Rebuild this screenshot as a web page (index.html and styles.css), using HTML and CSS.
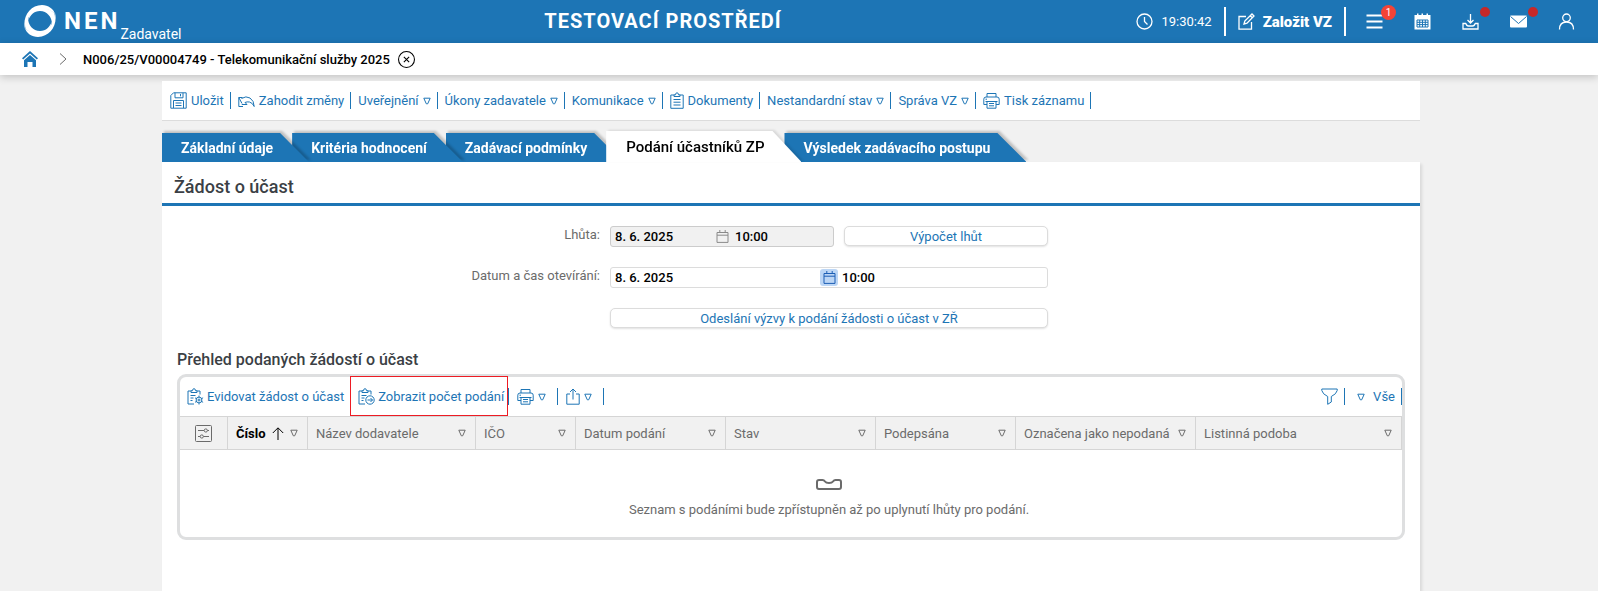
FILE: index.html
```html
<!DOCTYPE html>
<html lang="cs">
<head>
  <meta charset="UTF-8">
  <title>NEN - Podání účastníků ZP</title>
  <link rel="stylesheet" href="styles.css">
</head>
<body>
  <!-- Sdílené ikony -->
  <svg class="sprite" aria-hidden="true">
    <symbol id="i-arrow" viewBox="0 0 8 8"><path d="M.8 1.2h6.400L4.700 6.800H3.300z"/></symbol>
    <symbol id="i-print" viewBox="0 0 17 17"><path d="M4 5V1.5h9V5M4 12.5H.8V7.2Q.8 5 3 5h11q2.2 0 2.2 2.2v5.3H13M2.5 9.5h12M4 9.5v6.7h9V9.5M6 11.5h5M6 13.8h5M2.5 7.2h1.5"/></symbol>
    <symbol id="i-calendar" viewBox="0 0 13 13"><path d="M1 2.5h11v9.9H1zM1 5.2h11M3.8 0v2.5M9.2 0v2.5"/></symbol>
  </svg>

  <header class="header">
    <a class="logo" href="#">
      <svg class="logo-mark" viewBox="0 0 32 32">
        <path d="M1 24C-2 12 6 0 18 0c6 0 12 4 13 9-4-4-8-5-13-5C9 4 3 11 1 24z"/>
        <path d="M31 8c3 12-5 24-17 24C8 32 2 28 1 23c4 4 8 5 13 5 9 0 15-7 17-20z"/>
        <path d="M30 8c2 4 0 9-2 11 0-7-5-13-12-13-6 0-10 4-12 10C5 8 10 3 17 3c6 0 10 2 13 5zM2 24c-2-4 0-9 2-11 0 7 5 13 12 13 6 0 10-4 12-10-1 8-6 13-13 13-6 0-10-2-13-5z"/>
      </svg>
      <span class="logo-name">NEN</span>
      <span class="logo-role">Zadavatel</span>
    </a>
    <div class="env-title">TESTOVACÍ PROSTŘEDÍ</div>
    <div class="header-right">
      <div class="clock">
        <svg class="icon" viewBox="0 0 17 17"><circle cx="8.5" cy="8.5" r="7.5"/><path d="M8.5 4v4.5l3 3"/></svg>
        <span>19:30:42</span>
      </div>
      <button class="new-button" type="button">
        <svg class="icon" viewBox="0 0 17 17"><path d="M8 3.5H1v12.7h12.5V9M6 11l.8-3L14 1l2 2-7 7.2zM12.3 2.7l2 2"/></svg>
        Založit VZ
      </button>
      <button class="header-button" type="button" aria-label="Menu">
        <svg class="icon bold" viewBox="0 0 17 17"><path d="M.5 2.5h16M.5 8.5h16M.5 14.5h16"/></svg>
        <span class="badge">1</span>
      </button>
      <button class="header-button" type="button" aria-label="Kalendář">
        <svg class="icon" viewBox="0 0 17 17"><path class="fill" d="M.5 2H3V.5h1.5V2h3V.5H9V2h3.500V.5H14V2h2.500v14.500H.5z"/><path class="cut" d="M3 7h11v7H3zM3 9.300h11M3 11.600h11M5.700 7v7M8.500 7v7M11.300 7v7"/></svg>
      </button>
      <button class="header-button" type="button" aria-label="Stažené soubory">
        <svg class="icon" viewBox="0 0 17 17"><path d="M8.500 1v9M5.500 7l3 3 3-3M4 10.500H1V16h15v-5.500h-3M4 10.500q.5 2.500 2.500 2.500h4q2 0 2.500-2.500"/></svg>
        <span class="dot"></span>
      </button>
      <button class="header-button" type="button" aria-label="Zprávy">
        <svg class="icon" viewBox="0 0 17 17"><rect class="fill" x="0" y="2.500" width="17" height="12" rx="1"/><path class="cut" d="M.5 3.500l8 7 8-7"/></svg>
        <span class="dot"></span>
      </button>
      <button class="header-button" type="button" aria-label="Uživatel">
        <svg class="icon" viewBox="0 0 17 17"><circle cx="8.500" cy="4.800" r="3.800"/><path d="M1.500 16.500q0-7.500 7-7.500t7 7.500"/></svg>
      </button>
    </div>
  </header>

  <nav class="breadcrumb">
    <a class="home" href="#" aria-label="Domů">
      <svg viewBox="0 0 16 16"><path d="M0 7.200L8 0l8 7.200-1.200 1.300L8 2.500 1.200 8.500z"/><path d="M2 9.300l6-5.300 6 5.300V16h-3.500v-5h-5v5H2z"/></svg>
    </a>
    <svg class="chevron" viewBox="0 0 8 12"><path d="M1 .5L7 6l-6 5.500"/></svg>
    <span class="crumb">N006/25/V00004749 - Telekomunikační služby 2025</span>
    <button class="close-button" type="button" aria-label="Zavřít">
      <svg viewBox="0 0 16 16"><circle cx="8" cy="8" r="7.500"/><path d="M5.500 5.500l5 5M10.500 5.500l-5 5"/></svg>
    </button>
  </nav>

  <main class="main-content">
    <div class="toolbar">
      <button class="tool" type="button">
        <svg class="icon" viewBox="0 0 17 17"><path d="M3.500.8h12.700v15.400H.8V3.500zM5 .8v5h8v-5M10.500 2v2.300M3.500 16V8.500h10V16M5.500 11h6M5.500 13.500h6"/></svg>
        Uložit
      </button>
      <button class="tool" type="button">
        <svg class="icon" viewBox="0 0 17 17"><path d="M4.500 5.500H.8v9H5M.8 5.500L4 11.500M3.500 6.500Q8 3.500 12 6q4 2.500 4.200 8.500-1.700-3.700-4.700-4.500-2.500-.5-4.500.5l2 2H3.800"/></svg>
        Zahodit změny
      </button>
      <button class="tool" type="button">Uveřejnění <svg class="arrow"><use href="#i-arrow"/></svg></button>
      <button class="tool" type="button">Úkony zadavatele <svg class="arrow"><use href="#i-arrow"/></svg></button>
      <button class="tool" type="button">Komunikace <svg class="arrow"><use href="#i-arrow"/></svg></button>
      <button class="tool" type="button">
        <svg class="icon narrow" viewBox="0 0 14 17"><path d="M4 3H.8v13.300h12.400V3H10M4 4.500V2.800h1.500q0-2 1.500-2t1.500 2H10v1.700zM3.500 7.500h7M3.500 10.200h7M3.500 13h7"/></svg>
        Dokumenty
      </button>
      <button class="tool" type="button">Nestandardní stav <svg class="arrow"><use href="#i-arrow"/></svg></button>
      <button class="tool" type="button">Správa VZ <svg class="arrow"><use href="#i-arrow"/></svg></button>
      <button class="tool" type="button"><svg class="icon"><use href="#i-print"/></svg> Tisk záznamu</button>
    </div>

    <nav class="tabs">
      <div class="tab"><a href="#">Základní údaje</a></div>
      <div class="tab"><a href="#">Kritéria hodnocení</a></div>
      <div class="tab"><a href="#">Zadávací podmínky</a></div>
      <div class="tab active"><a href="#">Podání účastníků ZP</a></div>
      <div class="tab"><a href="#">Výsledek zadávacího postupu</a></div>
    </nav>

    <section class="panel">
      <h1 class="panel-title">Žádost o účast</h1>

      <form class="form">
        <label for="deadlineDate">Lhůta:</label>
        <div class="form-row">
          <div class="field disabled">
            <input id="deadlineDate" type="text" value="8. 6. 2025" readonly>
            <span class="calendar"><svg><use href="#i-calendar"/></svg></span>
            <input type="text" value="10:00" aria-label="Lhůta - čas" readonly>
          </div>
          <button class="form-button" type="button">Výpočet lhůt</button>
        </div>
        <label for="openDate">Datum a čas otevírání:</label>
        <div class="form-row">
          <div class="field">
            <input id="openDate" type="text" value="8. 6. 2025">
            <button class="calendar" type="button" aria-label="Vybrat datum"><svg><use href="#i-calendar"/></svg></button>
            <input type="text" value="10:00" aria-label="Čas otevírání">
          </div>
        </div>
        <div class="form-row last">
          <button class="form-button" type="button">Odeslání výzvy k podání žádosti o účast v ZŘ</button>
        </div>
      </form>

      <h2 class="list-title">Přehled podaných žádostí o účast</h2>
      <div class="list">
        <div class="list-toolbar">
          <button class="tool" type="button">
            <svg class="icon" viewBox="0 0 17 17"><path d="M4 3H1v13h6M4 4.500V2.700h1.500q0-2 1.500-2t1.500 2H10v1.800zM10 3h3v3.500M3.500 7.500h5M3.500 10h3M3.500 12.500h2M12 7.500v1.700M12 14.800v1.700M8 9.800l1.600 1M14.400 13.300l1.700 1M8 14.300l1.600-1M14.400 10.800l1.700-1"/><circle cx="12" cy="12" r="2.900"/><circle cx="12" cy="12" r="1"/></svg>
            Evidovat žádost o účast
          </button>
          <button class="tool highlighted" type="button">
            <svg class="icon" viewBox="0 0 17 17"><path d="M4 3H1v13h6M4 4.500V2.700h1.500q0-2 1.500-2t1.500 2H10v1.800zM10 3h3v3.500M3.500 7.500h5M3.500 10h3M3.500 12.500h2M9.500 12h5M12.500 10l2 2-2 2"/><circle cx="12" cy="12" r="4.200"/></svg>
            Zobrazit počet podání
          </button>
          <button class="tool menu" type="button" aria-label="Tisk"><svg class="icon"><use href="#i-print"/></svg><svg class="arrow"><use href="#i-arrow"/></svg></button>
          <button class="tool menu" type="button" aria-label="Export">
            <svg class="icon narrow" viewBox="0 0 14 17"><path d="M4 6H.8v10.200h12.400V6H10M7 11.500V1.200M4 4l3-3 3 3"/></svg>
            <svg class="arrow"><use href="#i-arrow"/></svg>
          </button>
          <button class="tool filter" type="button" aria-label="Filtr">
            <svg class="icon" viewBox="0 0 17 17"><path d="M.8 1h15.400v1.500Q15.500 6 10.300 8.500v5.500l-3.600 2.300V8.500Q1.500 6 .8 2.500z"/></svg>
          </button>
          <button class="tool view" type="button"><svg class="arrow"><use href="#i-arrow"/></svg> Vše</button>
        </div>
        <table class="list-table">
          <colgroup>
            <col class="w-settings"><col class="w-number"><col class="w-name"><col class="w-ico"><col class="w-date">
            <col class="w-date"><col class="w-signed"><col class="w-marked"><col>
          </colgroup>
          <thead>
            <tr>
              <th class="settings">
                <svg viewBox="0 0 17 17"><rect x=".5" y=".5" width="16" height="16" rx="1"/><path d="M3 5.500h6M12.500 5.500H14M3 11.500h2M8.500 11.500H14"/><circle cx="10.800" cy="5.500" r="1.600"/><circle cx="6.800" cy="11.500" r="1.600"/></svg>
              </th>
              <th class="sorted"><div>Číslo <svg class="sort" viewBox="0 0 12 13"><path d="M6 13V1M.8 6L6 .8 11.200 6"/></svg><svg class="arrow"><use href="#i-arrow"/></svg></div></th>
              <th><div>Název dodavatele <svg class="arrow"><use href="#i-arrow"/></svg></div></th>
              <th><div>IČO <svg class="arrow"><use href="#i-arrow"/></svg></div></th>
              <th><div>Datum podání <svg class="arrow"><use href="#i-arrow"/></svg></div></th>
              <th><div>Stav <svg class="arrow"><use href="#i-arrow"/></svg></div></th>
              <th><div>Podepsána <svg class="arrow"><use href="#i-arrow"/></svg></div></th>
              <th><div>Označena jako nepodaná <svg class="arrow"><use href="#i-arrow"/></svg></div></th>
              <th><div>Listinná podoba <svg class="arrow"><use href="#i-arrow"/></svg></div></th>
            </tr>
          </thead>
          <tbody>
            <tr>
              <td class="empty" colspan="9">
                <svg viewBox="0 0 26 11"><path d="M3 1h3.500q1.500 0 2.500 1.500t4 1.500 4-1.500T19.500 1H23q2 0 2 2v5q0 2-2 2H3q-2 0-2-2V3q0-2 2-2z"/></svg>
                <p>Seznam s podáními bude zpřístupněn až po uplynutí lhůty pro podání.</p>
              </td>
            </tr>
          </tbody>
        </table>
      </div>
    </section>
  </main>
</body>
</html>
```

FILE: styles.css
```css
* {
  box-sizing: border-box;
}
body {
  margin: 0;
  min-height: 100vh;
  display: flex;
  flex-direction: column;
  background: #f1f1f1;
  font-family: Roboto, Arial, sans-serif;
  font-size: 13px;
  color: #6b6b6b;
}
button, input {
  font-family: inherit;
  font-size: inherit;
}
button {
  border: none;
  background: none;
  padding: 0;
  cursor: pointer;
}
a {
  text-decoration: none;
}
svg {
  display: block;
  flex: none;
  fill: none;
  stroke: currentColor;
}
.sprite {
  width: 0;
  height: 0;
  position: absolute;
}
.icon {
  width: 17px;
  height: 17px;
}
.icon.narrow {
  width: 14px;
}
.arrow {
  width: 8px;
  height: 8px;
}

/* Horní lišta */
.header {
  display: grid;
  grid-template-columns: 1fr auto 1fr;
  align-items: center;
  height: 43px;
  background: #1d75b5;
  color: #fff;
}
.logo {
  display: flex;
  align-items: center;
  height: 43px;
  padding-left: 24px;
  color: #fff;
}
.logo-mark {
  width: 32px;
  height: 32px;
  margin-right: 8px;
  margin-bottom: 2px;
  fill: #fff;
  stroke: none;
}
.logo-name {
  padding-bottom: 2px;
  font-size: 24px;
  font-weight: 700;
  letter-spacing: 3px;
}
.logo-role {
  align-self: flex-end;
  font-size: 14px;
  line-height: 18px;
}
.env-title {
  font-size: 20px;
  font-weight: 700;
  letter-spacing: 1px;
  padding-right: 272px;
  padding-bottom: 2px;
}
.header-right {
  display: flex;
  align-items: center;
  justify-content: flex-end;
  padding-right: 8px;
}
.clock {
  display: flex;
  align-items: center;
  gap: 8px;
  padding-right: 12px;
}
.new-button {
  display: flex;
  align-items: center;
  gap: 8px;
  height: 29px;
  padding: 0 12px;
  margin-right: 4px;
  border-left: 2px solid #fff;
  border-right: 2px solid #fff;
  color: #fff;
  font-size: 15px;
  font-weight: 900;
  white-space: nowrap;
}
.header-button {
  position: relative;
  display: flex;
  justify-content: center;
  align-items: center;
  width: 48px;
  height: 43px;
  color: #fff;
}
.header .icon {
  stroke-width: 1.3;
}
.header .bold {
  stroke-width: 2;
}
.fill {
  fill: #fff;
  stroke: none;
}
.cut {
  stroke: #1d75b5;
  stroke-width: 1;
}
.badge {
  position: absolute;
  top: 5px;
  right: 2px;
  width: 15px;
  height: 15px;
  border-radius: 50%;
  background: #f44336;
  font-size: 10px;
  line-height: 15px;
}
.dot {
  position: absolute;
  top: 7px;
  right: 4px;
  width: 10px;
  height: 10px;
  border-radius: 50%;
  background: #c62828;
}

/* Drobečková navigace */
.breadcrumb {
  display: flex;
  align-items: center;
  height: 32px;
  padding-left: 22px;
  background: #fff;
  box-shadow: 0 2px 8px rgba(0, 0, 0, 0.2);
}
.home svg {
  width: 16px;
  height: 16px;
  fill: #1d75b5;
  stroke: none;
}
.chevron {
  width: 8px;
  height: 12px;
  margin: 0 16px 0 21px;
}
.crumb {
  color: #000;
  font-weight: 500;
}
.close-button {
  margin-left: 8px;
  color: #000;
}
.close-button svg {
  width: 17px;
  height: 17px;
}

.main-content {
  flex: 1;
  display: flex;
  flex-direction: column;
  padding: 6px 178px 0 162px;
}

/* Panel akcí */
.toolbar {
  display: flex;
  align-items: center;
  height: 40px;
  padding-left: 1px;
  background: #fff;
  border-bottom: 1px solid #dcdcdc;
}
.tool {
  display: flex;
  align-items: center;
  gap: 4px;
  height: 17px;
  padding: 0 6px 0 7px;
  border-right: 1px solid #1d75b5;
  color: #1d75b5;
  white-space: nowrap;
}

/* Záložky */
.tabs {
  display: flex;
  align-items: flex-end;
  height: 31px;
  margin-top: 10px;
}
.tab {
  position: relative;
  margin-right: -17px;
  filter: drop-shadow(2px -2px 1px rgba(0, 0, 0, 0.2));
}
.tab:nth-child(1) {
  z-index: 3;
}
.tab:nth-child(2) {
  z-index: 2;
}
.tab:nth-child(3) {
  z-index: 1;
}
.tab a {
  display: block;
  padding: 2px 36px 0 19px;
  background: #1d75b5;
  color: #fff;
  font-size: 14px;
  font-weight: 700;
  line-height: 27px;
  white-space: nowrap;
  clip-path: polygon(0 0, calc(100% - 29px) 0, 100% 100%, 0 100%);
}
.tab.active {
  z-index: 4;
  filter: drop-shadow(2px -1px 1px rgba(0, 0, 0, 0.1));
}
.tab.active a {
  padding: 2px 37px 0 20px;
  background: #fff;
  color: #000;
  font-size: 15px;
  font-weight: 500;
  line-height: 29px;
}

/* Obsah */
.panel {
  flex: 1;
  background: #fff;
  box-shadow: 2px 2px 3px rgba(0, 0, 0, 0.1);
}
.panel-title {
  margin: 0;
  padding: 8px 12px 0;
  height: 44px;
  border-bottom: 3px solid #1d75b5;
  color: #3b3f45;
  font-size: 18px;
  font-weight: 500;
  line-height: 34px;
}
.form {
  display: grid;
  grid-template-columns: 438px 438px;
  gap: 20px 10px;
  padding-top: 20px;
}
.form label {
  text-align: right;
  line-height: 18px;
}
.form-row {
  display: flex;
  gap: 10px;
  height: 21px;
}
.form-row.last {
  grid-column: 2;
}
.field {
  flex: 1;
  min-width: 0;
  display: flex;
  align-items: center;
  border: 1px solid #dcdcdc;
  border-radius: 3px;
}
.field.disabled {
  background: #f1f1f1;
  border-color: #ccc;
}
.field input {
  flex: 1;
  min-width: 0;
  padding: 0 4px;
  border: none;
  background: none;
  outline: none;
  color: #000;
  font-weight: 500;
}
.calendar {
  display: flex;
  align-items: center;
  justify-content: center;
  width: 18px;
  height: 17px;
  border-radius: 3px;
  color: #8a8a8a;
}
button.calendar {
  background: #bcd6f5;
  color: #1d5fb5;
}
.calendar svg {
  width: 13px;
  height: 13px;
}
.form-button {
  flex: 1;
  height: 20px;
  border: 1px solid #dcdcdc;
  border-radius: 5px;
  background: #fff;
  box-shadow: 0 1px 2px rgba(0, 0, 0, 0.12);
  color: #1d75b5;
}
.field.disabled + .form-button {
  flex: none;
  width: 204px;
}

/* Seznam podání */
.list-title {
  margin: 20px 15px 4px;
  color: #3b3f45;
  font-size: 16px;
  font-weight: 500;
  line-height: 21px;
}
.list {
  margin: 0 15px;
  border: 3px solid #dedfe0;
  border-radius: 9px;
}
.list-toolbar {
  display: flex;
  align-items: center;
  height: 39px;
}
.list-toolbar .tool {
  gap: 3px;
}
.list-toolbar .highlighted {
  padding-right: 4px;
}
.list-toolbar .menu {
  padding: 0 11px 0 8px;
  gap: 4px;
}
.highlighted {
  position: relative;
}
/* Červený rámeček zvýrazněné akce */
.highlighted::after {
  content: "";
  position: absolute;
  inset: -12px 0 -11px -1px;
  border: 1px solid #ed1c24;
}
.filter {
  margin-left: auto;
}
.list-toolbar .view {
  padding-left: 12px;
  gap: 8px;
}
.list-table {
  width: 100%;
  table-layout: fixed;
  border-collapse: separate;
  border-spacing: 0;
}
.w-settings { width: 48px; }
.w-number { width: 80px; }
.w-name { width: 168px; }
.w-ico { width: 100px; }
.w-date { width: 150px; }
.w-signed { width: 140px; }
.w-marked { width: 180px; }
.list-table th {
  height: 34px;
  padding: 0 9px 0 8px;
  background: #f1f1f1;
  border: 1px solid #d5d5d5;
  border-left: none;
  font-weight: 400;
  text-align: left;
  white-space: nowrap;
}
.list-table th div {
  display: flex;
  align-items: center;
  justify-content: space-between;
}
.list-table .settings svg {
  width: 17px;
  height: 17px;
  margin: 0 auto;
}
.list-table .sorted {
  color: #000;
  font-weight: 700;
}
.sorted .arrow {
  color: #6b6b6b;
}
.sort {
  width: 12px;
  height: 13px;
}
.empty {
  padding: 29px 0 19px 76px;
  text-align: center;
}
.empty svg {
  width: 26px;
  height: 11px;
  margin: 0 auto 12px;
  stroke-width: 2;
}
.empty p {
  margin: 0;
  line-height: 16px;
}
```
